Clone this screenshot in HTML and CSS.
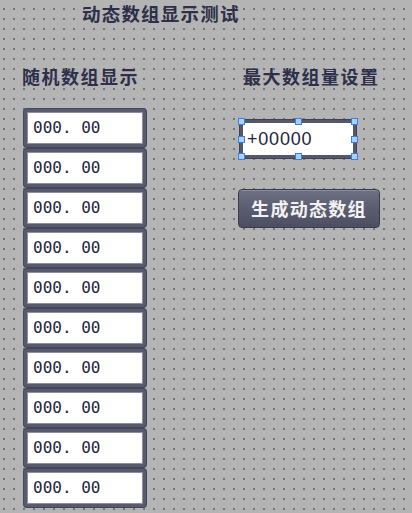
FILE: index.html
```html
<!DOCTYPE html>
<html lang="zh-CN">
<head>
<meta charset="utf-8">
<title>动态数组显示测试</title>
<link rel="stylesheet" href="styles.css">
</head>
<body>
<div class="canvas">
  <div class="title">动态数组显示测试</div>
  <div class="columns">
    <div class="col-left">
      <div class="label">随机数组显示</div>
      <div class="fields">
        <div class="field">000. 00</div>
        <div class="field">000. 00</div>
        <div class="field">000. 00</div>
        <div class="field">000. 00</div>
        <div class="field">000. 00</div>
        <div class="field">000. 00</div>
        <div class="field">000. 00</div>
        <div class="field">000. 00</div>
        <div class="field">000. 00</div>
        <div class="field">000. 00</div>
      </div>
    </div>
    <div class="col-right">
      <div class="label label-right">最大数组量设置</div>
      <div class="input">
        <span class="input-text">+00000</span>
        <span class="handle h-tl"></span>
        <span class="handle h-tm"></span>
        <span class="handle h-tr"></span>
        <span class="handle h-ml"></span>
        <span class="handle h-mr"></span>
        <span class="handle h-bl"></span>
        <span class="handle h-bm"></span>
        <span class="handle h-br"></span>
      </div>
      <div class="button">生成动态数组</div>
    </div>
  </div>
</div>
</body>
</html>
```

FILE: styles.css
```css
html, body {
  margin: 0;
  padding: 0;
}
body {
  width: 412px;
  height: 513px;
  overflow: hidden;
  background-color: #b4b4b4;
  background-image: conic-gradient(at 2px 2px, transparent 75%, #727272 0);
  background-size: 10px 10px;
  background-position: 3px 8px;
  font-family: "Noto Sans CJK SC", "Noto Sans", sans-serif;
}
.canvas {
  padding-top: 3px;
}
.title {
  padding-left: 82px;
  font-size: 18.5px;
  line-height: 20px;
  font-weight: 700;
  letter-spacing: 1.2px;
  color: #2e2f4a;
}
.columns {
  display: flex;
  margin-top: 43px;
}
.col-left {
  width: 216px;
  padding-left: 22px;
}
.col-right {
  display: flex;
  flex-direction: column;
  align-items: flex-start;
}
.label {
  font-size: 18px;
  line-height: 20px;
  font-weight: 700;
  letter-spacing: 1.5px;
  color: #2e2f4a;
  white-space: nowrap;
}
.label-right {
  margin-left: 5px;
}
.fields {
  display: flex;
  flex-direction: column;
  gap: 2px;
  margin-top: 23px;
  margin-left: 2px;
}
.field {
  box-sizing: border-box;
  width: 122px;
  height: 38px;
  background: #ffffff;
  border: 3px solid #585b6e;
  box-shadow: 0 0 0 1px #44475a, inset 0 0 0 1px #8c8fa0;
  border-radius: 3px;
  padding-left: 6px;
  font-family: "DejaVu Sans Mono", monospace;
  font-size: 16px;
  line-height: 32px;
  color: #23243c;
}
.input {
  position: relative;
  box-sizing: border-box;
  width: 116px;
  height: 38px;
  margin-top: 34px;
  margin-left: 2px;
  background: #ffffff;
  border: 3px solid #55586b;
  box-shadow: 0 0 0 1px #404356;
  padding-left: 4px;
  font-family: "Liberation Sans", Arial, sans-serif;
  font-size: 18px;
  line-height: 32px;
  letter-spacing: 0.8px;
  color: #23243c;
}
.handle {
  position: absolute;
  width: 5px;
  height: 5px;
  background: #a9d1ff;
  border: 1px solid #3d7ee0;
}
.h-tl { left: -5px; top: -5px; }
.h-tm { left: 52px; top: -5px; }
.h-tr { right: -5px; top: -5px; }
.h-ml { left: -5px; top: 13px; }
.h-mr { right: -5px; top: 13px; }
.h-bl { left: -5px; bottom: -5px; }
.h-bm { left: 52px; bottom: -5px; }
.h-br { right: -5px; bottom: -5px; }
.button {
  box-sizing: border-box;
  width: 142px;
  height: 39px;
  margin-top: 31px;
  border: 1px solid #3a3c4c;
  border-radius: 4px;
  background: linear-gradient(#6e7184, #5a5d70 50%, #4c4f62);
  box-shadow: inset 0 1px 0 #8a8da0;
  text-align: center;
  font-size: 18px;
  line-height: 36px;
  font-weight: 700;
  letter-spacing: 1.3px;
  color: #f2f2f4;
}
```
